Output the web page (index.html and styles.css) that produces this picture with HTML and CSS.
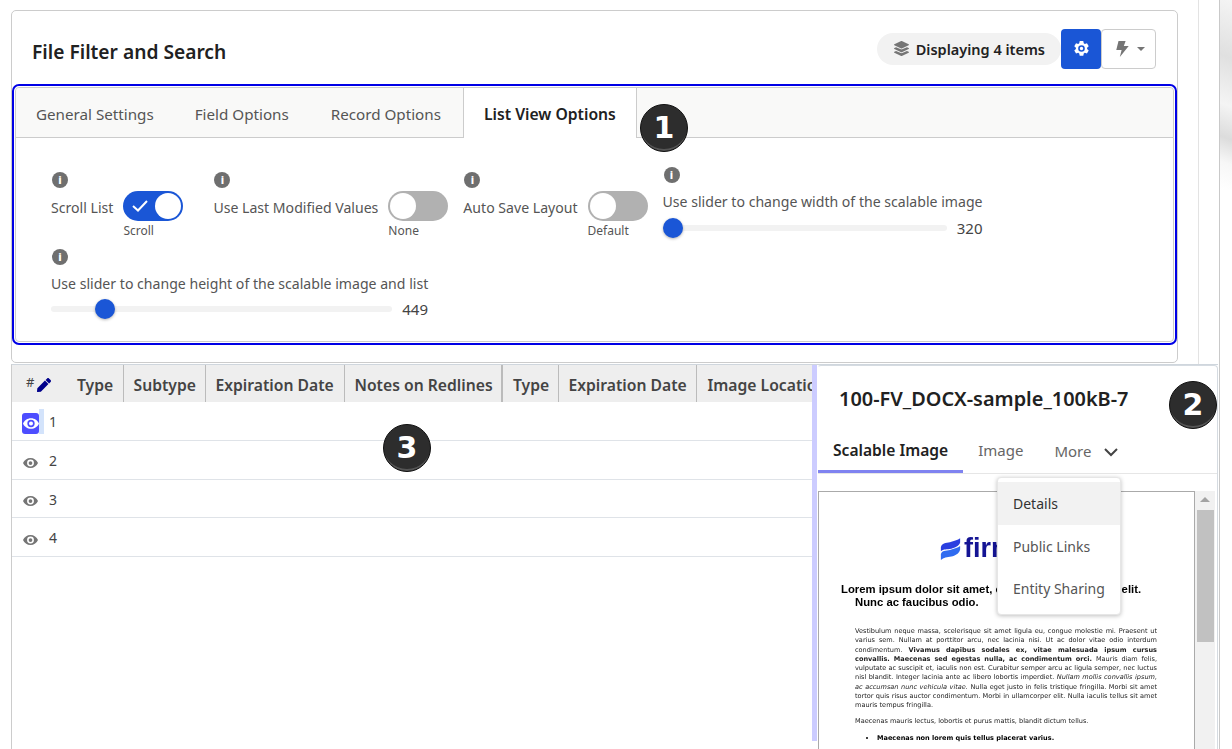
FILE: index.html
```html
<!DOCTYPE html>
<html lang="en">
<head>
    <meta charset="UTF-8">
    <title>File Filter and Search</title>
    <link rel="stylesheet" href="styles.css">
</head>
<body>
<div class="page-back"></div>

<!-- settings card -->
<div class="card">
    <div class="card-head">
        <h1>File Filter and Search</h1>
        <div class="head-tools">
            <div class="count-pill">
                <svg viewBox="0 0 512 512" width="15" height="15"><path fill="#757575" d="M12.4 148l232.9 105.7c6.800 3.100 14.600 3.100 21.400 0L499.600 148c16.500-7.500 16.500-32.500 0-40L266.700 2.300a25.600 25.600 0 0 0-21.400 0L12.400 108c-16.500 7.500-16.500 32.500 0 40zm487.200 88.300l-58.100-26.300-161.700 73.300c-7.600 3.400-15.600 5.200-23.800 5.200s-16.200-1.800-23.800-5.200L70.500 210l-58.100 26.300c-16.500 7.500-16.500 32.500 0 40l232.900 105.600c6.800 3.100 14.600 3.100 21.400 0L499.600 276.300c16.500-7.500 16.500-32.500 0-40zm0 127.800l-57.900-26.200-162 73.400c-7.600 3.400-15.600 5.200-23.800 5.200s-16.200-1.800-23.800-5.200L70.300 338l-57.900 26.200c-16.500 7.500-16.500 32.500 0 40l232.900 105.600c6.800 3.100 14.600 3.100 21.400 0l232.900-105.600c16.500-7.500 16.500-32.500 0-40z"/></svg>
                <span>Displaying 4 items</span>
            </div>
            <button class="btn-gear">
                <svg viewBox="0 0 24 24" width="17" height="17"><path fill="#fff" fill-rule="evenodd" d="M9.500 1.500h5l.7 3.100 1.500.9 3-1 2.500 4.300-2.300 2.100v1.800l2.300 2.100-2.500 4.300-3-1-1.500.9-.7 3.100h-5l-.7-3.100-1.500-.9-3 1L1.800 14.800l2.300-2.100v-1.800L1.800 8.800l2.500-4.300 3 1 1.500-.9zM12 7.300a4.700 4.700 0 1 0 0 9.400 4.700 4.700 0 0 0 0-9.400zm0 2.300a2.400 2.400 0 1 1 0 4.800 2.400 2.400 0 0 1 0-4.800z"/></svg>
            </button>
            <button class="btn-bolt">
                <svg viewBox="0 0 14 18" width="13" height="16"><path fill="#757575" d="M2.500 0h8L8.500 5.500H14L4 18l2-8H0z"/></svg>
                <span class="caret"></span>
            </button>
        </div>
    </div>

    <div class="options-panel">
        <div class="tabs">
            <div class="tab tab-first">General Settings</div>
            <div class="tab">Field Options</div>
            <div class="tab tab-third">Record Options</div>
            <div class="tab tab-active">List View Options</div>
        </div>
        <div class="options-body">
            <div class="setting setting-first">
                <span class="info">i</span>
                <div class="setting-row">
                    <label>Scroll List</label>
                    <div>
                        <div class="toggle toggle-on">
                            <svg viewBox="0 0 16 12" width="16" height="12"><path fill="none" stroke="#fff" stroke-width="2" d="M1 6l5 4.500L15 1"/></svg>
                            <span class="knob"></span>
                        </div>
                        <div class="toggle-text">Scroll</div>
                    </div>
                </div>
            </div>
            <div class="setting">
                <span class="info">i</span>
                <div class="setting-row">
                    <label>Use Last Modified Values</label>
                    <div>
                        <div class="toggle"><span class="knob"></span></div>
                        <div class="toggle-text">None</div>
                    </div>
                </div>
            </div>
            <div class="setting">
                <span class="info">i</span>
                <div class="setting-row">
                    <label>Auto Save Layout</label>
                    <div>
                        <div class="toggle"><span class="knob"></span></div>
                        <div class="toggle-text">Default</div>
                    </div>
                </div>
            </div>
            <div class="setting setting-slider">
                <span class="info">i</span>
                <label>Use slider to change width of the scalable image</label>
                <div class="slider-row">
                    <div class="track"><span class="thumb thumb-w"></span></div>
                    <span class="slider-val">320</span>
                </div>
            </div>
            <div class="setting setting-slider setting-height">
                <span class="info">i</span>
                <label>Use slider to change height of the scalable image and list</label>
                <div class="slider-row">
                    <div class="track"><span class="thumb thumb-h"></span></div>
                    <span class="slider-val">449</span>
                </div>
            </div>
        </div>
    </div>
    <span class="step step-1">1</span>
</div>

<!-- list and preview -->
<div class="lower">
    <div class="list-side">
        <table class="list">
            <colgroup>
                <col class="c-num"><col class="c-type"><col class="c-sub"><col class="c-exp"><col class="c-notes"><col class="c-type2"><col class="c-exp2"><col class="c-loc">
            </colgroup>
            <thead>
                <tr>
                    <th class="th-num"><span class="hash">#</span><svg viewBox="0 0 512 512" width="14" height="14"><path fill="#00008b" d="M290.700 93.200l128 128-278 278-114.100 12.600C11.300 513.500-1.600 500.600.1 485.300l12.700-114.200zm207.200-19.100L437.800 14c-18.700-18.700-49.100-18.700-67.900 0l-56.500 56.500 128 128 56.500-56.500c18.800-18.700 18.800-49.100 0-67.900z"/></svg></th>
                    <th>Type</th>
                    <th>Subtype</th>
                    <th>Expiration Date</th>
                    <th class="th-thick">Notes on Redlines</th>
                    <th>Type</th>
                    <th>Expiration Date</th>
                    <th class="th-last">Image Location</th>
                </tr>
            </thead>
            <tbody>
                <tr>
                    <td><div class="num-cell"><span class="eye-on"><svg viewBox="0 0 24 16" width="16" height="11"><path fill="#fff" fill-rule="evenodd" d="M12 0C6.500 0 2 3.300 0 8c2 4.700 6.500 8 12 8s10-3.300 12-8c-2-4.700-6.500-8-12-8zm0 2.500a5.500 5.500 0 1 1 0 11 5.500 5.500 0 0 1 0-11zm0 2.500a3 3 0 1 0 0 6 3 3 0 0 0 0-6z"/></svg></span><span class="sel-mark"></span><span class="row-n">1</span></div></td>
                    <td colspan="7"></td>
                </tr>
                <tr>
                    <td><div class="num-cell"><svg class="eye" viewBox="0 0 24 16" width="15" height="10"><path fill="#757575" fill-rule="evenodd" d="M12 0C6.500 0 2 3.300 0 8c2 4.700 6.500 8 12 8s10-3.300 12-8c-2-4.700-6.500-8-12-8zm0 2.500a5.500 5.500 0 1 1 0 11 5.500 5.500 0 0 1 0-11zm0 2.500a3 3 0 1 0 0 6 3 3 0 0 0 0-6z"/></svg><span class="row-n">2</span></div></td>
                    <td colspan="7"></td>
                </tr>
                <tr>
                    <td><div class="num-cell"><svg class="eye" viewBox="0 0 24 16" width="15" height="10"><path fill="#757575" fill-rule="evenodd" d="M12 0C6.500 0 2 3.300 0 8c2 4.700 6.500 8 12 8s10-3.300 12-8c-2-4.700-6.500-8-12-8zm0 2.500a5.500 5.500 0 1 1 0 11 5.500 5.500 0 0 1 0-11zm0 2.500a3 3 0 1 0 0 6 3 3 0 0 0 0-6z"/></svg><span class="row-n">3</span></div></td>
                    <td colspan="7"></td>
                </tr>
                <tr>
                    <td><div class="num-cell"><svg class="eye" viewBox="0 0 24 16" width="15" height="10"><path fill="#757575" fill-rule="evenodd" d="M12 0C6.500 0 2 3.300 0 8c2 4.700 6.500 8 12 8s10-3.300 12-8c-2-4.700-6.500-8-12-8zm0 2.500a5.500 5.500 0 1 1 0 11 5.500 5.500 0 0 1 0-11zm0 2.500a3 3 0 1 0 0 6 3 3 0 0 0 0-6z"/></svg><span class="row-n">4</span></div></td>
                    <td colspan="7"></td>
                </tr>
            </tbody>
        </table>
        <span class="step step-3">3</span>
    </div>
    <div class="splitter"></div>

    <div class="preview">
        <h2>100-FV_DOCX-sample_100kB-7</h2>
        <span class="step step-2">2</span>
        <div class="preview-tabs">
            <div class="ptab ptab-active">Scalable Image</div>
            <div class="ptab">Image</div>
            <div class="ptab ptab-more">More
                <svg viewBox="0 0 14 9" width="14" height="9"><path fill="none" stroke="#444" stroke-width="2" d="M1 1l6 6 6-6"/></svg>
            </div>
        </div>
        <div class="menu">
            <div class="menu-item menu-item-hover">Details</div>
            <div class="menu-item">Public Links</div>
            <div class="menu-item">Entity Sharing</div>
        </div>
        <div class="doc-wrap">
            <div class="doc">
                <div class="doc-logo">
                    <svg viewBox="0 0 24 26" width="21" height="25"><path fill="#2a3fe0" d="M1 10C3 4 9 6 13 4c4-1 7-2 10-4v5c-1 4-6 6-10 7-5 1-9 0-12 3z"/><path fill="#2f6bf0" d="M1 18c2-5 8-3 12-5 4-1 7-2 10-4v4c-1 5-6 7-10 8-5 1-9 1-12 4z"/></svg>
                    <span>firmbee</span>
                </div>
                <h3>Lorem ipsum dolor sit amet, consectetur adipiscing elit. Nunc ac faucibus odio.</h3>
                <p>Vestibulum neque massa, scelerisque sit amet ligula eu, congue molestie mi. Praesent ut varius sem. Nullam at porttitor arcu, nec lacinia nisi. Ut ac dolor vitae odio interdum condimentum. <b>Vivamus dapibus sodales ex, vitae malesuada ipsum cursus convallis. Maecenas sed egestas nulla, ac condimentum orci.</b> Mauris diam felis, vulputate ac suscipit et, iaculis non est. Curabitur semper arcu ac ligula semper, nec luctus nisl blandit. Integer lacinia ante ac libero lobortis imperdiet. <i>Nullam mollis convallis ipsum, ac accumsan nunc vehicula vitae.</i> Nulla eget justo in felis tristique fringilla. Morbi sit amet tortor quis risus auctor condimentum. Morbi in ullamcorper elit. Nulla iaculis tellus sit amet mauris tempus fringilla.</p>
                <p>Maecenas mauris lectus, lobortis et purus mattis, blandit dictum tellus.</p>
                <ul>
                    <li><b>Maecenas non lorem quis tellus placerat varius.</b></li>
                </ul>
            </div>
            <div class="scrollbar">
                <span class="scroll-up"></span>
                <span class="scroll-thumb"></span>
            </div>
        </div>
    </div>
</div>
</body>
</html>
```

FILE: styles.css
```css
*{
    box-sizing: border-box;
}

html,body{
    height: 749px;
    overflow: hidden;
}

body{
    margin: 0;
    padding: 10px 0 0 11px;
    font-family: "Noto Sans", "Open Sans", sans-serif;
    font-size: 14px;
    color: #555;
    background: #fff;
    position: relative;
}

/* line and picture behind the page, right side */
.page-back{
    position: absolute;
    top: 0;
    left: 1198px;
    width: 34px;
    height: 749px;
    background:
        linear-gradient(#e3e3e3, #e3e3e3) 0 0 / 1px 364px no-repeat,
        linear-gradient(#c9c9c9, #c9c9c9) 21px 0 / 1px 749px no-repeat,
        linear-gradient(200deg, #f4f4f4 0, #e0e0e0 30%, #f4f4f4 55%, #dcdcdc 72%, #f7f7f7 85%, #fff 100%) 22px 0 / 12px 190px no-repeat;
}

/* CARD */
.card{
    position: relative;
    width: 1167px;
    height: 353px;
    border: 1px solid #ccc;
    border-radius: 5px;
    background: #fff;
    padding: 0 1px;
}

.card-head{
    height: 73px;
    display: flex;
    align-items: center;
    justify-content: space-between;
    padding: 2px 20px 0 19px;
}

.card-head h1{
    margin: 5px 0 0;
    font-size: 19.200px;
    font-weight: 600;
    color: #212121;
}

.head-tools{
    display: flex;
    align-items: center;
}

.count-pill{
    display: flex;
    align-items: center;
    gap: 7px;
    height: 32px;
    padding: 0 16px 0 17px;
    background: #f2f2f2;
    border-radius: 16px;
    font-size: 14.500px;
    font-weight: 600;
    color: #212121;
    white-space: nowrap;
}

.btn-gear{
    width: 40px;
    height: 40px;
    border: 0;
    border-radius: 4px;
    background: #1a56d6;
    display: flex;
    align-items: center;
    justify-content: center;
    padding: 0;
}

.btn-bolt{
    width: 55px;
    height: 40px;
    border: 1px solid #ccc;
    border-radius: 4px;
    background: #fff;
    display: flex;
    align-items: center;
    justify-content: center;
    gap: 8px;
    padding: 0 0 0 4px;
}

.caret{
    width: 0;
    height: 0;
    border-left: 4px solid transparent;
    border-right: 4px solid transparent;
    border-top: 4px solid #757575;
}

/* OPTIONS PANEL */
.options-panel{
    margin: 3px 2px 0 2px;
    width: 1159px;
    height: 255px;
    border: 1px solid #ccc;
    border-radius: 4px;
    outline: 2px solid #0000e6;
    outline-offset: 1px;
}

.tabs{
    display: flex;
    height: 50px;
    background: #f9f9f8;
    border-bottom: 1px solid #ccc;
    border-radius: 4px 4px 0 0;
}

.tab{
    padding: 0 21px;
    line-height: 53px;
    font-size: 15.200px;
    color: #555;
    white-space: nowrap;
}

.tab-first{
    padding: 0 20px;
}

.tab-third{
    padding-right: 22px;
}

.tab-active{
    height: 50px;
    padding: 0 20px;
    background: #fff;
    color: #212121;
    font-size: 15.700px;
    font-weight: 600;
    border-left: 1px solid #ccc;
    border-right: 1px solid #ccc;
}

.options-body{
    display: flex;
    flex-wrap: wrap;
    align-items: flex-start;
    column-gap: 15px;
    padding: 29px 0 0 35px;
}

.setting{
    padding-top: 5px;
}

.setting-first{
    margin-right: 15px;
}

.setting-slider{
    padding-top: 0;
}

.setting-height{
    width: 377px;
    margin-top: 10px;
}

.setting label{
    display: block;
    font-size: 14.100px;
    line-height: 20px;
    color: #555;
    white-space: nowrap;
}

.info{
    display: block;
    width: 16px;
    height: 16px;
    margin: 0 0 3px 1px;
    border-radius: 50%;
    background: #6f6f6f;
    color: #fff;
    font-size: 11px;
    font-weight: 800;
    line-height: 16px;
    text-align: center;
}

.setting-slider .info{
    margin-bottom: 9px;
}

.setting-row{
    display: flex;
    align-items: flex-start;
    gap: 10px;
}

.setting-row label{
    margin-top: 7px;
}

.toggle{
    position: relative;
    width: 60px;
    height: 30px;
    border-radius: 15px;
    background: #b1b1b1;
}

.toggle .knob{
    position: absolute;
    top: 2px;
    left: 2px;
    width: 26px;
    height: 26px;
    border-radius: 50%;
    background: #fff;
}

.toggle-on{
    background: #1a56d6;
}

.toggle-on .knob{
    left: 32px;
}

.toggle-on svg{
    position: absolute;
    left: 9px;
    top: 9px;
}

.toggle-text{
    margin-top: 1px;
    font-size: 12px;
    line-height: 17px;
    color: #555;
}

.slider-row{
    display: flex;
    align-items: center;
    gap: 10px;
    margin-top: 6px;
}

.setting-height .slider-row{
    margin-top: 5px;
}

.track{
    position: relative;
    flex: 1;
    width: 284px;
    height: 6px;
    border-radius: 3px;
    background: #f2f2f2;
}

.thumb{
    position: absolute;
    top: -7px;
    width: 20px;
    height: 20px;
    border-radius: 50%;
    background: #1a56d6;
    box-shadow: 0 1px 3px rgba(0,0,0,.3);
}

.thumb-w{
    left: 0;
}

.thumb-h{
    left: 44px;
}

.slider-val{
    font-size: 15px;
    line-height: 20px;
    color: #444;
}

/* numbered marks */
.step{
    position: absolute;
    width: 48px;
    height: 48px;
    border-radius: 50%;
    background: #2d2d2d;
    border: 1px solid #111;
    color: #fff;
    font-family: "DejaVu Sans", sans-serif;
    font-size: 30px;
    font-weight: 700;
    line-height: 46px;
    text-align: center;
    box-shadow: inset 0 -3px 0 -1px #555;
    z-index: 5;
}

.step-1{
    left: 628px;
    top: 93px;
}

.step-2{
    left: 351px;
    top: 15px;
}

.step-3{
    left: 371px;
    top: 59px;
}

/* LOWER PART */
.lower{
    display: flex;
    align-items: flex-start;
    width: 1207px;
    height: 385px;
    margin-top: 1px;
    border-top: 1px solid #cfd6dd;
    border-left: 1px solid #ccc;
    overflow: hidden;
}

.list-side{
    position: relative;
    width: 800px;
    height: 376px;
    overflow: hidden;
}

.list{
    width: 801px;
    table-layout: fixed;
    border-collapse: collapse;
    font-size: 14px;
}

.c-num{ width: 54px; }
.c-type{ width: 57px; }
.c-sub{ width: 82px; }
.c-exp{ width: 139px; }
.c-notes{ width: 158px; }
.c-type2{ width: 56px; }
.c-exp2{ width: 138px; }
.c-loc{ width: 117px; }

.list thead tr{
    height: 37px;
    background: #eee;
}

.list th{
    padding: 2px 0 0 10px;
    font-size: 15.700px;
    font-weight: 600;
    color: #444;
    text-align: left;
    white-space: nowrap;
    overflow: hidden;
    border-right: 1px solid #bbb;
}

.list .th-num{
    padding: 0 0 0 14px;
    font-size: 14px;
    font-weight: 400;
    border-right: 0;
}

.th-num svg{
    margin-left: 3px;
    vertical-align: -3px;
}

.hash{
    font-size: 13px;
    position: relative;
    top: -2px;
}

.list .th-thick{
    border-right: 2px solid #bbb;
}

.list .th-last{
    border-right: 0;
    padding-left: 11px;
}

.list th:nth-child(2){
    padding-left: 11px;
}

.list tbody tr{
    height: 38.500px;
    border-bottom: 1px solid #dfe3e8;
}

.list tbody td{
    padding: 0;
}

.num-cell{
    display: flex;
    align-items: center;
    padding-left: 10px;
}

.row-n{
    color: #444;
    font-size: 14px;
    margin: 2px 0 0 11px;
}

.eye{
    margin: 6px 0 0 1px;
}

.eye-on{
    display: flex;
    align-items: center;
    justify-content: center;
    width: 17px;
    height: 21px;
    margin-top: 5px;
    border-radius: 3px;
    background: #4d4dff;
}

.sel-mark{
    width: 5px;
    height: 25px;
    background: #d3e3fb;
}

.sel-mark + .row-n{
    margin: 0 0 0 5px;
}

.splitter{
    width: 5px;
    height: 376px;
    background: #ccf;
}

/* PREVIEW */
.preview{
    position: relative;
    width: 401px;
    height: 384px;
    border: 1px solid #d5dbe1;
    border-left: 1px solid #fff;
    border-bottom: 0;
    border-radius: 4px 4px 0 0;
    background: #fff;
}

.preview h2{
    margin: 0;
    padding: 20px 0 0 21px;
    font-size: 19.900px;
    line-height: 25px;
    font-weight: 600;
    color: #212121;
    white-space: nowrap;
}

.preview-tabs{
    display: flex;
    align-items: flex-start;
    height: 34px;
    margin-top: 29px;
    border-bottom: 1px solid #e6e6e6;
}

.ptab{
    height: 33px;
    padding: 0 15px;
    font-size: 15px;
    line-height: 20px;
    color: #666;
    white-space: nowrap;
}

.ptab-active{
    color: #212121;
    font-size: 15.600px;
    font-weight: 600;
    border-bottom: 3px solid #7f83f0;
}

.ptab-more{
    display: flex;
    gap: 13px;
    line-height: 22px;
    padding-left: 16px;
}

.ptab-more svg{
    margin-top: 8px;
}

.menu{
    position: absolute;
    left: 179px;
    top: 111px;
    width: 124px;
    height: 138px;
    padding-top: 4px;
    background: #fff;
    border: 1px solid #e6e6e6;
    border-radius: 4px;
    box-shadow: 0 1px 4px rgba(0,0,0,.25);
    z-index: 4;
}

.menu-item{
    height: 42px;
    padding: 0 15px;
    font-size: 14px;
    line-height: 44px;
    color: #555;
    white-space: nowrap;
}

.menu-item-hover{
    height: 43px;
    background: #f2f2f2;
    color: #333;
}

.doc-wrap{
    display: flex;
    margin-top: 17px;
}

.doc{
    width: 377px;
    height: 258px;
    overflow: hidden;
    border: 1px solid #aaa;
    border-bottom: 0;
    padding: 44px 37px 0 36px;
    font-family: "DejaVu Sans", sans-serif;
    font-size: 6.550px;
    line-height: 9.300px;
    color: #222;
}

.doc > *{
    filter: blur(.25px);
}

.doc-logo{
    display: flex;
    align-items: center;
    gap: 3px;
    height: 26px;
    margin-left: 85px;
    font-family: "Liberation Sans", sans-serif;
    font-size: 27px;
    font-weight: 700;
    color: #141494;
    white-space: nowrap;
}

.doc h3{
    margin: 21px 0 0 -15px;
    padding-left: 15px;
    text-indent: -14px;
    font-family: "Liberation Sans", sans-serif;
    font-size: 11.300px;
    line-height: 13px;
    font-weight: 700;
    color: #000;
}

.doc p{
    margin: 18px 0 0;
    text-align: justify;
}

.doc p + p{
    margin-top: 6.500px;
}

.doc ul{
    margin: 7.700px 0 0;
    padding-left: 22px;
    color: #000;
}

.scrollbar{
    position: relative;
    width: 20px;
    height: 258px;
    background: #f1f1f1;
}

.scroll-up{
    position: absolute;
    top: 6px;
    left: 5px;
    width: 0;
    height: 0;
    border-left: 5px solid transparent;
    border-right: 5px solid transparent;
    border-bottom: 5px solid #a3a3a3;
}

.scroll-thumb{
    position: absolute;
    top: 19px;
    left: 2px;
    width: 17px;
    height: 132px;
    background: #c1c1c1;
}
```
